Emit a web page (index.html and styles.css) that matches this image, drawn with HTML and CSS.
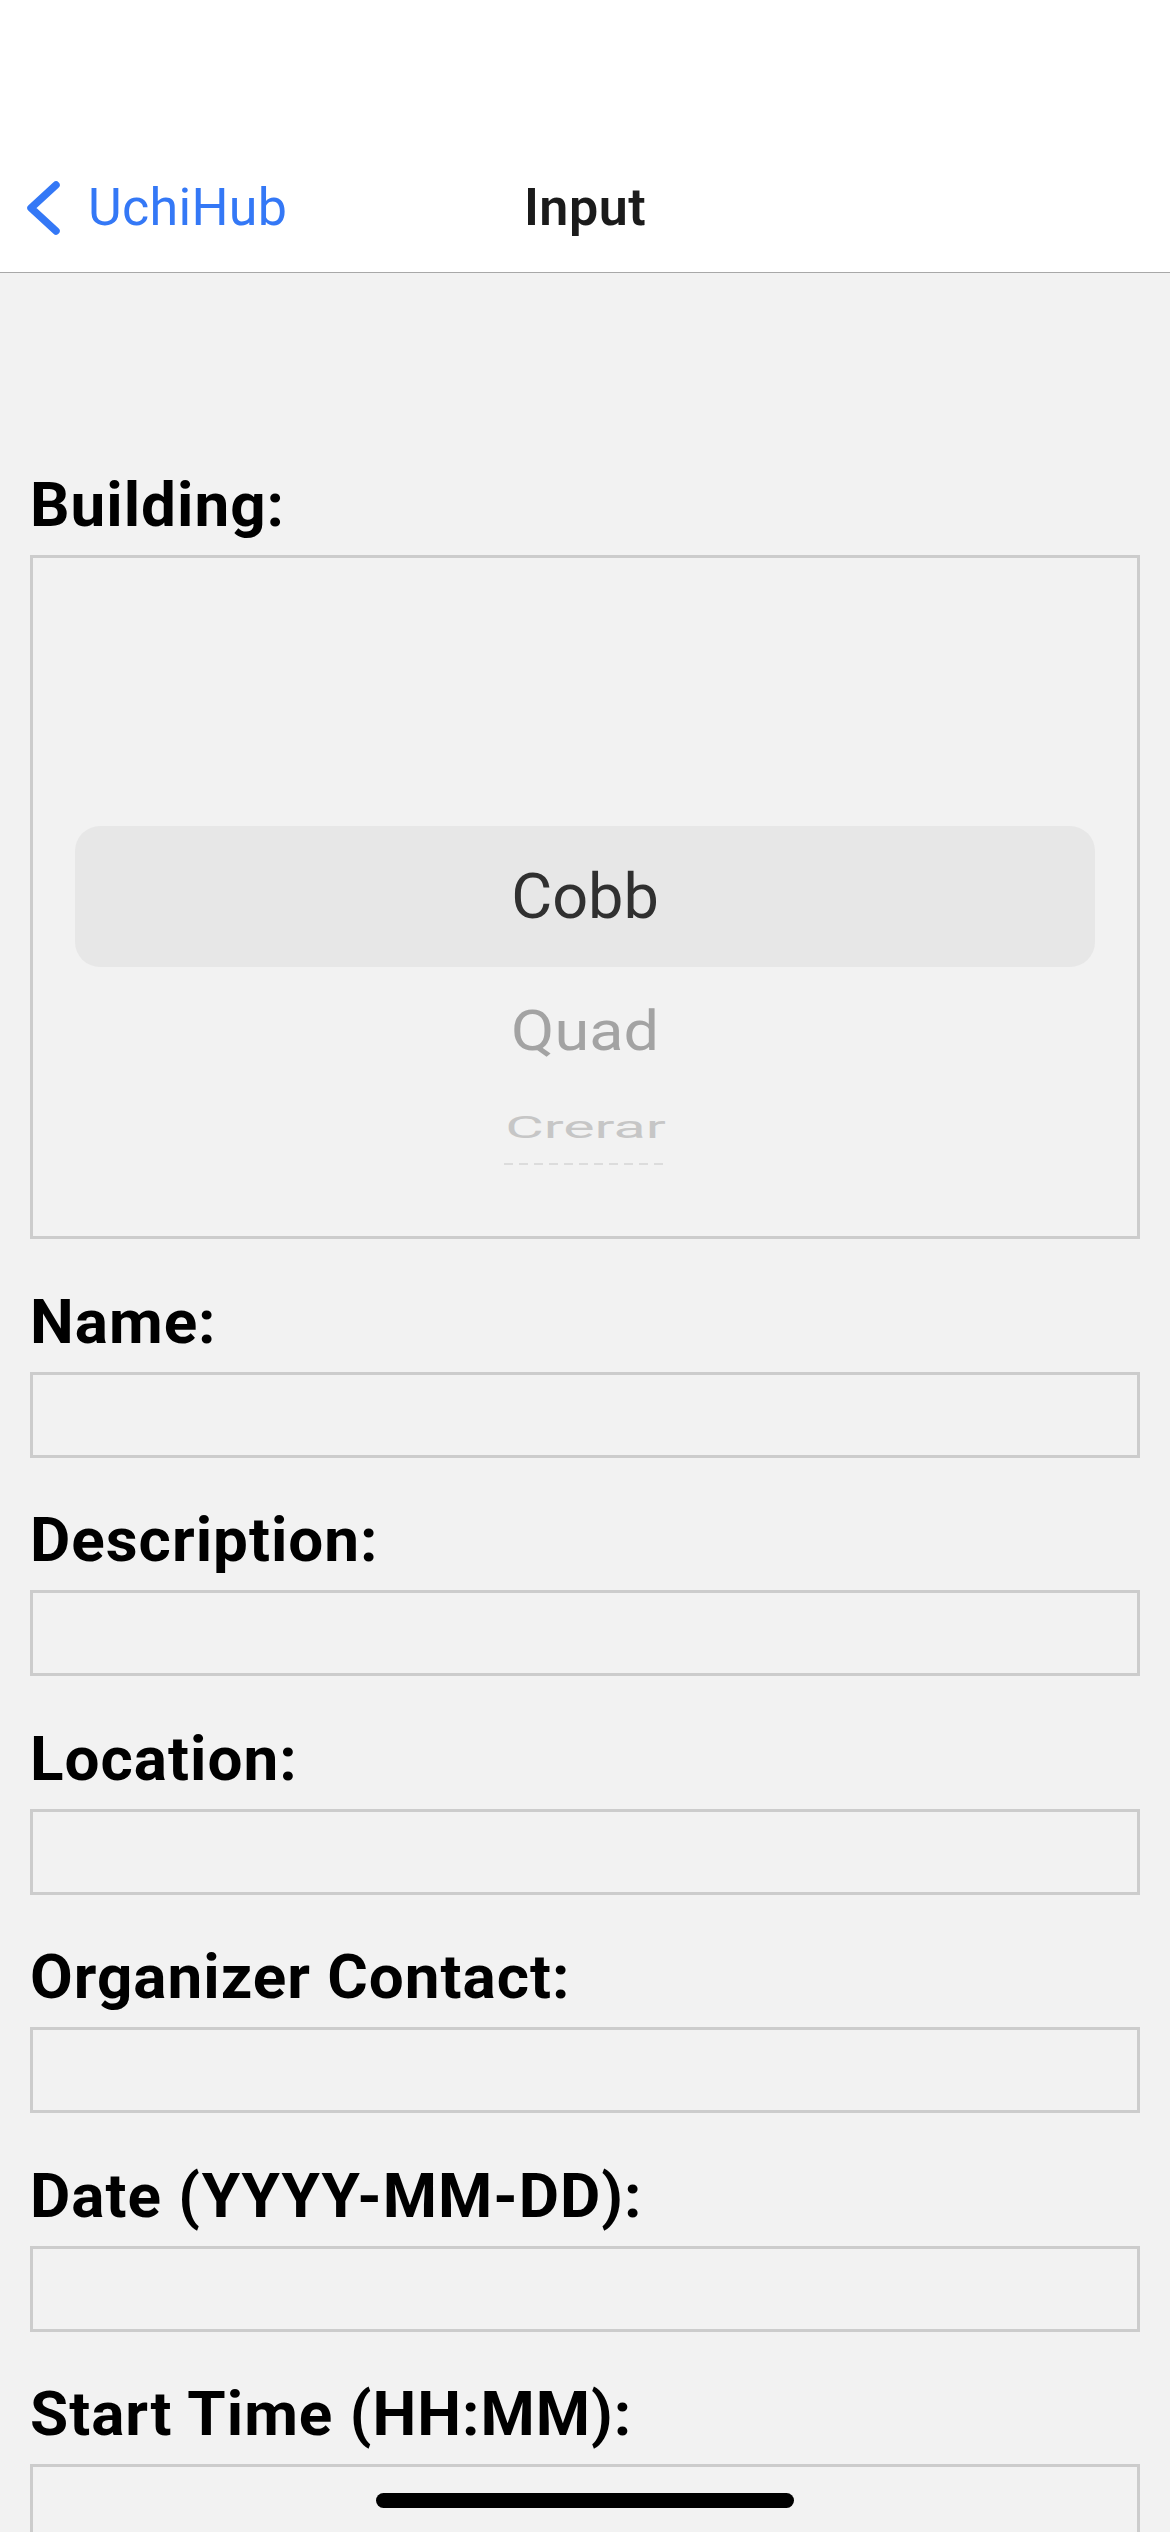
FILE: index.html
```html
<!DOCTYPE html>
<html lang="en">
<head>
<meta charset="utf-8">
<title>Input</title>
<link rel="stylesheet" href="styles.css">
</head>
<body>
  <header class="navbar">
    <div class="nav-row">
      <a class="back">
        <svg class="chevron" width="44" height="60" viewBox="0 0 44 60" aria-hidden="true">
          <path d="M36 7 L11 30 L36 53" fill="none" stroke="#3478f6" stroke-width="7.5" stroke-linecap="round" stroke-linejoin="round"/>
        </svg>
        <span class="back-text">UchiHub</span>
      </a>
      <div class="nav-title">Input</div>
      <div class="nav-spacer"></div>
    </div>
  </header>

  <main class="form">
    <label class="label">Building:</label>
    <div class="picker">
      <div class="pick-sel"><span class="pick-text">Cobb</span></div>
      <div class="pick-row pick-row-1"><span class="pick-text">Quad</span></div>
      <div class="pick-row pick-row-2"><span class="pick-text">Crerar</span></div>
      <div class="pick-row pick-row-3"><span class="pick-dash"></span></div>
    </div>

    <label class="label">Name:</label>
    <div class="input"></div>

    <label class="label">Description:</label>
    <div class="input"></div>

    <label class="label">Location:</label>
    <div class="input"></div>

    <label class="label">Organizer Contact:</label>
    <div class="input"></div>

    <label class="label">Date (YYYY-MM-DD):</label>
    <div class="input"></div>

    <label class="label">Start Time (HH:MM):</label>
    <div class="input"></div>
  </main>

  <div class="home-indicator"></div>
</body>
</html>
```

FILE: styles.css
```css
* {
  box-sizing: border-box;
}

html, body {
  margin: 0;
  padding: 0;
}

body {
  width: 1170px;
  height: 2532px;
  overflow: hidden;
  background: #f2f2f2;
  font-family: Roboto, "Liberation Sans", Arial, sans-serif;
  color: #000;
}

.navbar {
  background: #ffffff;
  padding-top: 141px;
  height: 273px;
  border-bottom: 1.5px solid #a8a8a8;
}

.nav-row {
  height: 131px;
  display: grid;
  grid-template-columns: 1fr auto 1fr;
  align-items: center;
  padding-top: 2px;
}

.back {
  display: flex;
  align-items: center;
  padding-left: 20px;
  gap: 24px;
  color: #3478f6;
  text-decoration: none;
}

.chevron {
  display: block;
  flex: none;
}

.back-text {
  font-size: 52px;
  font-weight: 400;
  line-height: 60px;
  color: #3478f6;
  letter-spacing: 0.3px;
}

.nav-title {
  font-size: 52px;
  font-weight: 600;
  line-height: 60px;
  color: #1b1b1b;
  text-align: center;
  letter-spacing: 0.5px;
}

.form {
  padding: 196px 30px 0;
  display: flex;
  flex-direction: column;
}

.label {
  display: block;
  font-size: 62px;
  font-weight: 700;
  line-height: 72px;
  height: 72px;
  margin-bottom: 14px;
  white-space: nowrap;
  color: #000;
  letter-spacing: 1px;
}

.input {
  height: 86px;
  border: 3px solid #cccccc;
  margin-bottom: 46.5px;
  flex: none;
}

.picker {
  height: 684px;
  border: 3px solid #cccccc;
  margin-bottom: 46.5px;
  padding-top: 268px;
  display: flex;
  flex-direction: column;
  align-items: center;
  flex: none;
  overflow: hidden;
}

.pick-sel {
  align-self: stretch;
  margin: 0 42px;
  height: 141px;
  border-radius: 25px;
  background: #e7e7e7;
  display: flex;
  align-items: center;
  justify-content: center;
}

.pick-text {
  display: block;
  font-size: 63px;
  font-weight: 400;
  line-height: 63px;
  white-space: nowrap;
}

.pick-sel .pick-text {
  color: #303030;
}

.pick-row {
  display: flex;
  align-items: center;
  justify-content: center;
}

.pick-row-1 {
  height: 129px;
}

.pick-row-1 .pick-text {
  color: #a3a3a3;
  transform: scaleY(0.87);
}

.pick-row-2 {
  height: 62px;
}

.pick-row-2 .pick-text {
  color: #c6c6c6;
  transform: scale(0.94, 0.49);
}

.pick-row-3 {
  height: 6px;
  margin-top: 3px;
}

.pick-dash {
  display: block;
  width: 162px;
  height: 2px;
  background: repeating-linear-gradient(90deg, #dcdcdc 0 9px, transparent 9px 15px);
}

.home-indicator {
  position: fixed;
  left: 376px;
  bottom: 24px;
  width: 418px;
  height: 15px;
  border-radius: 8px;
  background: #000;
}
```
